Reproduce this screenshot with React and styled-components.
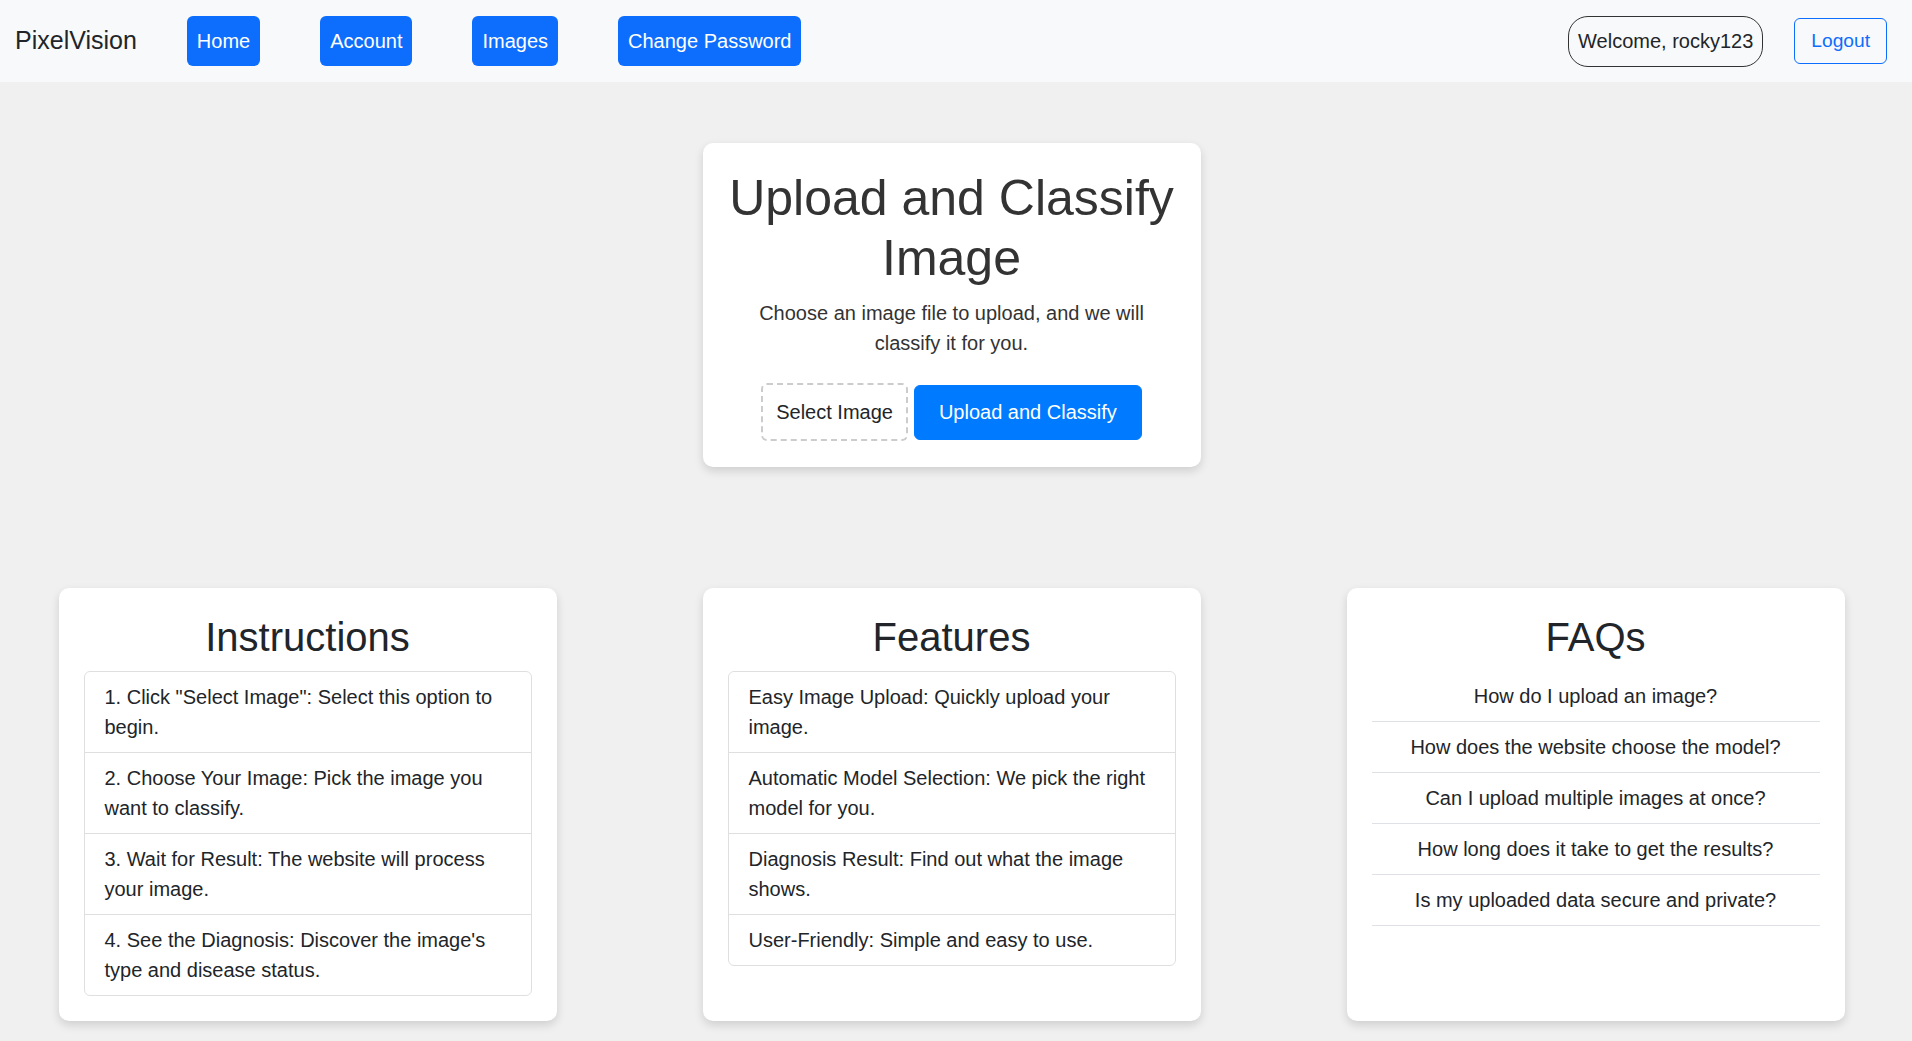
import React from "react";
import styled, { createGlobalStyle } from "styled-components";

const GlobalStyle = createGlobalStyle`
  body {
    margin: 0;
    background: #f0f0f0;
    font-family: "Liberation Sans", Arial, sans-serif;
    color: #212529;
  }

  * {
    box-sizing: border-box;
  }
`;

const Navbar = styled.nav`
  display: flex;
  align-items: center;
  height: 82px;
  padding: 0 25px 0 15px;
  background: #f8f9fa;
`;

const Brand = styled.a`
  font-size: 25px;
  line-height: 1.5;
  color: #212529;
  text-decoration: none;
  margin-right: 50px;
`;

const NavLinks = styled.div`
  display: flex;
  gap: 60px;
`;

const NavButton = styled.a`
  display: inline-block;
  padding: 10px;
  font-size: 20px;
  line-height: 30px;
  color: #fff;
  background: #0d6efd;
  border-radius: 6px;
  text-decoration: none;
`;

const UserArea = styled.div`
  display: flex;
  align-items: center;
  gap: 31px;
  margin-left: auto;
`;

const Welcome = styled.span`
  padding: 9.5px 9px;
  font-size: 20px;
  line-height: 30px;
  border: 1px solid #333;
  border-radius: 20px;
`;

const OutlineButton = styled.button`
  padding: 7.6px 16px;
  font-family: inherit;
  font-size: 19.2px;
  line-height: 28.8px;
  color: #0d6efd;
  background: transparent;
  border: 1px solid #0d6efd;
  border-radius: 6px;
`;

const Main = styled.main`
  width: 100vw;
  padding: 61px 9px 19px 0;
`;

const Card = styled.section`
  width: 498px;
  padding: 25px;
  background: #fff;
  border-radius: 10px;
  box-shadow: 0 4px 10px rgba(0, 0, 0, 0.14);
`;

const UploadCard = styled(Card)`
  margin: 0 auto;
  padding: 25px 20px 26px;
  text-align: center;
  color: #333;
`;

const Title = styled.h1`
  margin: 0 0 10px;
  font-size: 50px;
  line-height: 60px;
  font-weight: 400;
`;

const Lead = styled.p`
  margin: 0 0 25px;
  padding: 0 10px;
  font-size: 20px;
  line-height: 30px;
`;

const Actions = styled.div`
  display: flex;
  justify-content: center;
  align-items: baseline;
  gap: 6px;
`;

const SelectLabel = styled.label`
  padding: 12px 13px;
  font-size: 20px;
  line-height: 30px;
  color: #212529;
  border: 2px dashed #ccc;
  border-radius: 6px;
`;

const PrimaryButton = styled.button`
  padding: 11.5px 24px;
  font-family: inherit;
  font-size: 20px;
  line-height: 30px;
  color: #fff;
  background: #007bff;
  border: 1px solid #007bff;
  border-radius: 6px;
`;

const CardRow = styled.div`
  display: grid;
  grid-template-columns: repeat(3, 498px);
  column-gap: 146px;
  justify-content: center;
  margin-top: 121px;
`;

const CardTitle = styled.h2`
  margin: 0 0 10px;
  font-size: 40px;
  line-height: 48px;
  font-weight: 400;
  text-align: center;
`;

const ListGroup = styled.ul`
  margin: 0;
  padding: 0;
  list-style: none;
  border: 1px solid rgba(0, 0, 0, 0.125);
  border-radius: 6px;
`;

const ListItem = styled.li`
  padding: 10px 20px;
  font-size: 20px;
  line-height: 30px;

  & + & {
    border-top: 1px solid rgba(0, 0, 0, 0.125);
  }
`;

const FaqList = styled.ul`
  margin: 0;
  padding: 0;
  list-style: none;
`;

const FaqItem = styled.li`
  padding: 10px 0;
  font-size: 20px;
  line-height: 30px;
  text-align: center;
  border-bottom: 1px solid #dee2e6;
`;

const instructions = [
  '1. Click "Select Image": Select this option to begin.',
  "2. Choose Your Image: Pick the image you want to classify.",
  "3. Wait for Result: The website will process your image.",
  "4. See the Diagnosis: Discover the image's type and disease status.",
];

const features = [
  "Easy Image Upload: Quickly upload your image.",
  "Automatic Model Selection: We pick the right model for you.",
  "Diagnosis Result: Find out what the image shows.",
  "User-Friendly: Simple and easy to use.",
];

const faqs = [
  "How do I upload an image?",
  "How does the website choose the model?",
  "Can I upload multiple images at once?",
  "How long does it take to get the results?",
  "Is my uploaded data secure and private?",
];

const App = () => {
  return (
    <>
      <GlobalStyle />
      <Navbar>
        <Brand href="#">PixelVision</Brand>
        <NavLinks>
          <NavButton href="#">Home</NavButton>
          <NavButton href="#">Account</NavButton>
          <NavButton href="#">Images</NavButton>
          <NavButton href="#">Change Password</NavButton>
        </NavLinks>
        <UserArea>
          <Welcome>Welcome, rocky123</Welcome>
          <OutlineButton>Logout</OutlineButton>
        </UserArea>
      </Navbar>

      <Main>
        <UploadCard>
          <Title>Upload and Classify Image</Title>
          <Lead>Choose an image file to upload, and we will classify it for you.</Lead>
          <Actions>
            <SelectLabel>Select Image</SelectLabel>
            <PrimaryButton>Upload and Classify</PrimaryButton>
          </Actions>
        </UploadCard>

        <CardRow>
          <Card>
            <CardTitle>Instructions</CardTitle>
            <ListGroup>
              {instructions.map((text) => (
                <ListItem key={text}>{text}</ListItem>
              ))}
            </ListGroup>
          </Card>
          <Card>
            <CardTitle>Features</CardTitle>
            <ListGroup>
              {features.map((text) => (
                <ListItem key={text}>{text}</ListItem>
              ))}
            </ListGroup>
          </Card>
          <Card>
            <CardTitle>FAQs</CardTitle>
            <FaqList>
              {faqs.map((text) => (
                <FaqItem key={text}>{text}</FaqItem>
              ))}
            </FaqList>
          </Card>
        </CardRow>
      </Main>
    </>
  );
};

export default App;
